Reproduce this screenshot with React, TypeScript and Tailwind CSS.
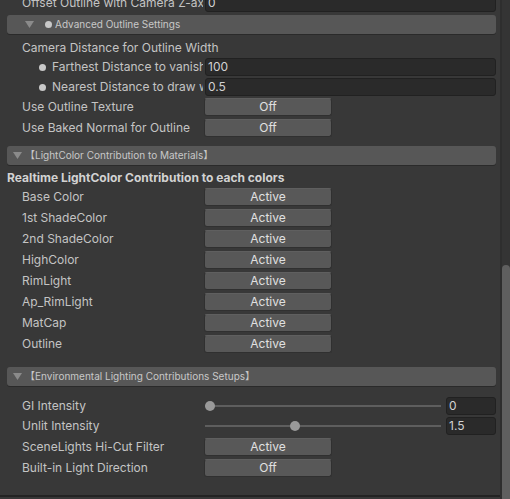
import React from "react";

const FONT = { fontFamily: "Inter, 'Noto Sans CJK JP', sans-serif" };

function Label({ children, pl = "pl-[22px]" }: { children: React.ReactNode; pl?: string }) {
  return (
    <div className={`w-[203px] shrink-0 overflow-hidden whitespace-nowrap ${pl}`}>{children}</div>
  );
}

function Field({ value, w = "w-[291px]" }: { value: string; w?: string }) {
  return (
    <div className={`ml-[2px] h-[18px] ${w} rounded-[3px] border border-[#212121] bg-[#2a2a2a] pl-[2px] leading-[16px] text-[#d2d2d2]`}>
      {value}
    </div>
  );
}

function Btn({ value }: { value: string }) {
  return (
    <div className="ml-[1px] h-[18px] w-[128px] rounded-[3px] border border-[#303030] border-t-[#5f5f5f] bg-[#585858] text-center leading-[16px] text-[#e0e0e0]">
      {value}
    </div>
  );
}

function Dot() {
  return <span className="inline-block h-[7px] w-[7px] rounded-full bg-[#c8c8c8] align-middle" />;
}

function Tri() {
  return (
    <svg width="9" height="8" viewBox="0 0 9 8" className="shrink-0">
      <path d="M0 0 L9 0 L4.5 7 Z" fill="#8b8b8b" />
    </svg>
  );
}

function Header({ children, triPad }: { children: React.ReactNode; triPad: string }) {
  return (
    <div className={`ml-[7px] flex h-[19px] w-[489px] items-center rounded-[3px] bg-[#575757] shadow-[0_1px_0_#2a2a2a] ${triPad} text-[10px] text-[#c8c8c8]`}>
      {children}
    </div>
  );
}

function BtnRow({ label, value, mt = "mt-[3px]" }: { label: string; value: string; mt?: string }) {
  return (
    <div className={`flex h-[18px] items-center ${mt}`}>
      <Label>{label}</Label>
      <Btn value={value} />
    </div>
  );
}

function SliderRow({ label, value, pos, mt }: { label: string; value: string; pos: number; mt: string }) {
  return (
    <div className={`flex h-[18px] items-center ${mt}`}>
      <Label>{label}</Label>
      <div className="relative ml-[2px] h-[18px] w-[236px]">
        <div className="absolute left-0 right-0 top-[8px] h-[2px] bg-[#5e5e5e]" />
        <div
          className="absolute top-[4px] h-[10px] w-[10px] rounded-full bg-[#999999]"
          style={{ left: pos - 5 }}
        />
      </div>
      <div className="ml-[5px] h-[18px] w-[50px] rounded-[3px] border border-[#212121] bg-[#2a2a2a] pl-[2px] leading-[16px] text-[#d2d2d2]">
        {value}
      </div>
    </div>
  );
}

export default function App() {
  const colors = [
    "Base Color",
    "1st ShadeColor",
    "2nd ShadeColor",
    "HighColor",
    "RimLight",
    "Ap_RimLight",
    "MatCap",
    "Outline",
  ];
  return (
    <div
      className="flex h-[499px] w-[510px] overflow-hidden bg-[#383838] text-[12px] text-[#c4c4c4]"
      style={FONT}
    >
      <div className="flex w-[500px] shrink-0 flex-col">
        <div className="mt-[-6px] flex h-[18px] items-center">
          <Label>Offset Outline with Camera Z-axis</Label>
          <Field value="0" />
        </div>
        <div className="mt-[3px]">
          <Header triPad="pl-[18px]">
            <Tri />
            <span className="ml-[11px] inline-block h-[7px] w-[7px] rounded-full bg-[#c8c8c8]" />
            <span className="ml-[3px]">Advanced Outline Settings</span>
          </Header>
        </div>
        <div className="mt-[5px] flex h-[18px] items-center whitespace-nowrap pl-[22px]">
          Camera Distance for Outline Width
        </div>
        <div className="mt-[1px] flex h-[18px] items-center">
          <Label pl="pl-[39px]">
            <Dot />
            <span className="ml-[6px]">Farthest Distance to vanish</span>
          </Label>
          <Field value="100" />
        </div>
        <div className="mt-[2px] flex h-[18px] items-center">
          <Label pl="pl-[39px]">
            <Dot />
            <span className="ml-[6px]">Nearest Distance to draw with Outline</span>
          </Label>
          <Field value="0.5" />
        </div>
        <BtnRow label="Use Outline Texture" value="Off" mt="mt-[2px]" />
        <BtnRow label="Use Baked Normal for Outline" value="Off" />
        <div className="mt-[9px]">
          <Header triPad="pl-[6px]">
            <Tri />
            <span className="ml-[3px]">【LightColor Contribution to Materials】</span>
          </Header>
        </div>
        <div className="mt-[4px] flex h-[18px] items-center pl-[7px] font-bold text-[#d2d2d2]">
          Realtime LightColor Contribution to each colors
        </div>
        <div className="mt-[-2px]">
          {colors.map((c) => (
            <BtnRow key={c} label={c} value="Active" />
          ))}
        </div>
        <div className="mt-[14px]">
          <Header triPad="pl-[6px]">
            <Tri />
            <span className="ml-[3px]">【Environmental Lighting Contributions Setups】</span>
          </Header>
        </div>
        <SliderRow label="GI Intensity" value="0" pos={5} mt="mt-[11px]" />
        <SliderRow label="Unlit Intensity" value="1.5" pos={90} mt="mt-[2px]" />
        <BtnRow label="SceneLights Hi-Cut Filter" value="Active" />
        <BtnRow label="Built-in Light Direction" value="Off" />
        <div className="mt-[18px] h-[2px] w-full bg-[#232323]" />
      </div>
      <div className="flex w-[10px] shrink-0 flex-col border-l-2 border-[#2e2e2e] bg-[#343434]">
        <div className="mt-[265px] flex-1 rounded-t-[4px] bg-[#5f5f5f]" />
      </div>
    </div>
  );
}
